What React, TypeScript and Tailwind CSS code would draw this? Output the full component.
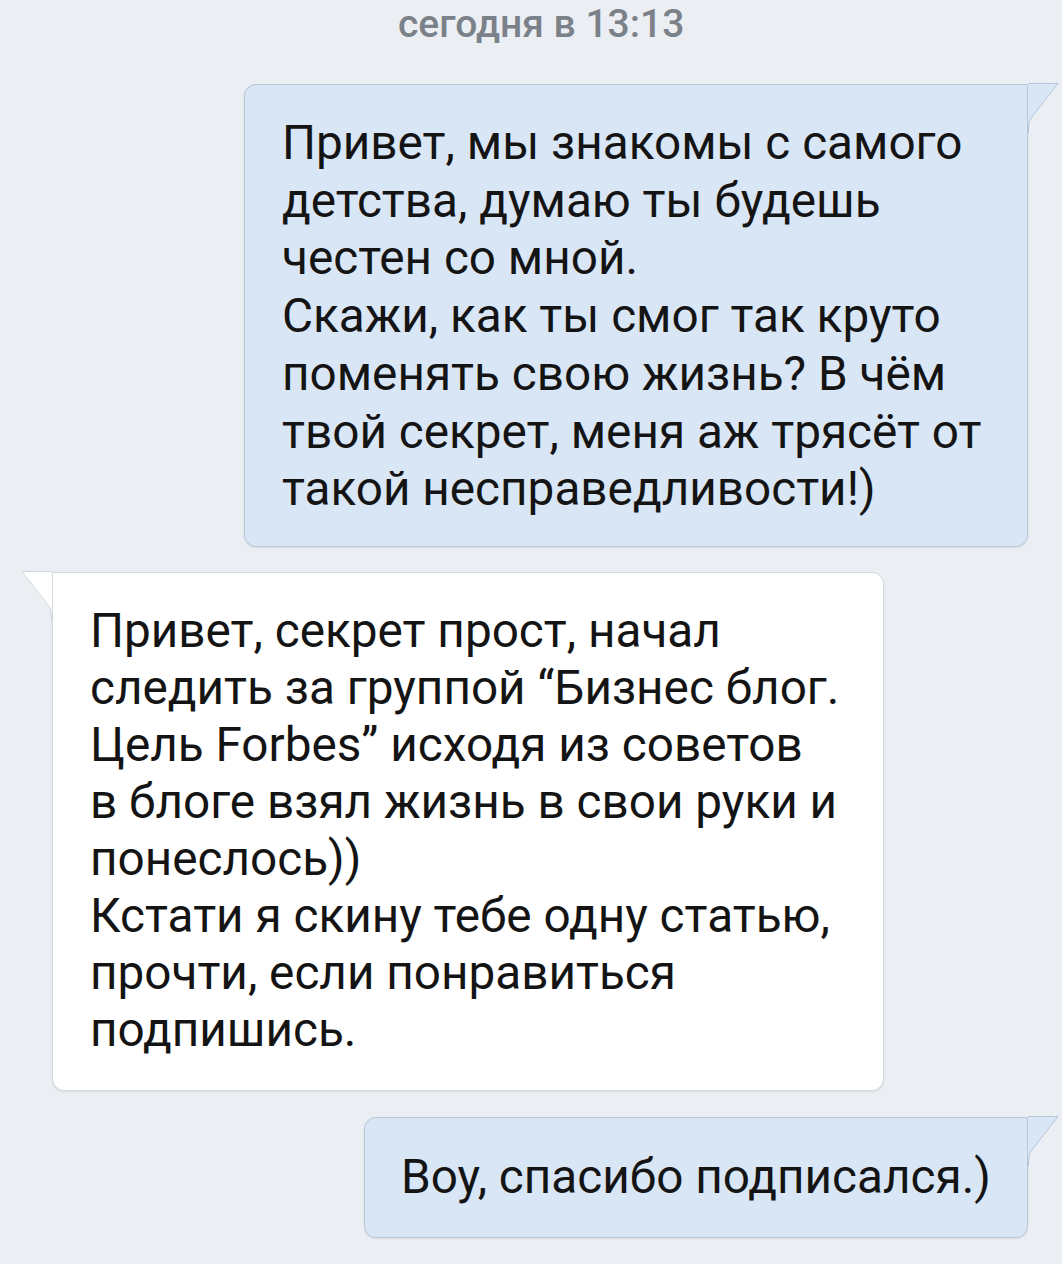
import React from "react";

const BLUE = "#d9e6f5";
const BLUE_BORDER = "#b7c7da";
const WHITE_BORDER = "#d2d7de";

function RightTail({ fill, stroke }: { fill: string; stroke: string }) {
  return (
    <svg
      className="absolute left-full top-[-1px]"
      width="32"
      height="50"
      viewBox="0 0 32 50"
    >
      <path d="M0 0 H31 L3.5 35 Q0.5 39 0.5 45 V50 H0 Z" fill={fill} />
      <path
        d="M0 0.5 H30 L3 35 Q0.5 38.5 0.5 45 V50"
        fill="none"
        stroke={stroke}
        strokeWidth="1"
      />
    </svg>
  );
}

function LeftTail({ fill, stroke }: { fill: string; stroke: string }) {
  return (
    <svg
      className="absolute right-full top-[-1px]"
      width="32"
      height="50"
      viewBox="0 0 32 50"
    >
      <path d="M32 0 H1 L28.5 35 Q31.5 39 31.5 45 V50 H32 Z" fill={fill} />
      <path
        d="M32 0.5 H2 L29 35 Q31.5 38.5 31.5 45 V50"
        fill="none"
        stroke={stroke}
        strokeWidth="1"
      />
    </svg>
  );
}

export default function App() {
  return (
    <div
      className="w-[1062px] h-[1264px] bg-[#ebeef2] overflow-hidden flex flex-col"
      style={{ fontFamily: "Roboto, 'Noto Sans', sans-serif" }}
    >
      <div className="pl-[398px] pt-[1px] h-[84px] text-[39px] leading-[46px] font-medium text-[#7b8189] whitespace-nowrap">
        сегодня в 13:13
      </div>

      <div className="ml-[244px] w-[784px] relative">
        <div className="rounded-[12px] rounded-tr-none border border-[#b7c7da] bg-[#d9e6f5] shadow-[0_1px_2px_rgba(0,0,0,0.08)] pl-[37px] pr-[20px] pt-[30px] pb-[27px] text-[47.7px] leading-[57.7px] text-[#141414] whitespace-nowrap">
          Привет, мы знакомы с самого
          <br />
          детства, думаю ты будешь
          <br />
          честен со мной.
          <br />
          Скажи, как ты смог так круто
          <br />
          поменять свою жизнь? В чём
          <br />
          твой секрет, меня аж трясёт от
          <br />
          такой несправедливости!)
        </div>
        <RightTail fill={BLUE} stroke={BLUE_BORDER} />
      </div>

      <div className="ml-[52px] mt-[25px] w-[832px] relative">
        <div className="rounded-[12px] rounded-tl-none border border-[#d2d7de] bg-white shadow-[0_1px_2px_rgba(0,0,0,0.08)] pl-[37px] pr-[20px] pt-[30px] pb-[31px] text-[47.7px] leading-[57px] text-[#141414] whitespace-nowrap">
          Привет, секрет прост, начал
          <br />
          следить за группой “Бизнес блог.
          <br />
          Цель Forbes” исходя из советов
          <br />
          в блоге взял жизнь в свои руки и
          <br />
          понеслось))
          <br />
          Кстати я скину тебе одну статью,
          <br />
          прочти, если понравиться
          <br />
          подпишись.
        </div>
        <LeftTail fill="#ffffff" stroke={WHITE_BORDER} />
      </div>

      <div className="ml-[364px] mt-[26px] w-[664px] relative">
        <div className="h-[121px] rounded-[12px] rounded-tr-none border border-[#b7c7da] bg-[#d9e6f5] shadow-[0_1px_2px_rgba(0,0,0,0.08)] pl-[36px] flex items-center text-[47.7px] leading-[58px] text-[#141414] whitespace-nowrap">
          Воу, спасибо подписался.)
        </div>
        <RightTail fill={BLUE} stroke={BLUE_BORDER} />
      </div>
    </div>
  );
}
